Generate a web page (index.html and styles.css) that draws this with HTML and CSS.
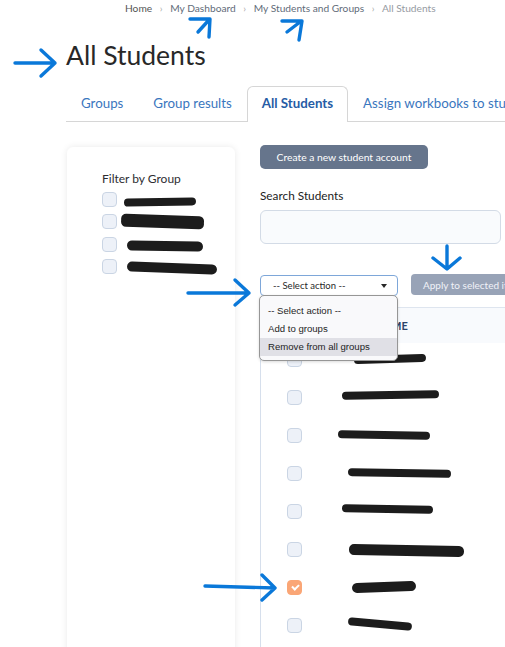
FILE: index.html
```html
<!DOCTYPE html>
<html lang="en">

<head>
  <meta charset="utf-8">
  <title>All Students</title>
  <meta name="viewport" content="width=device-width, initial-scale=1.0">
  <link rel="stylesheet" href="styles.css">
</head>

<body>
  <div class="page">
    <!--breadcrumb-->
    <nav class="crumbs">
      <a class="crumb crumb-home" href="#">Home</a>
      <span class="sep">&rsaquo;</span>
      <a class="crumb" href="#">My Dashboard</a>
      <span class="sep">&rsaquo;</span>
      <a class="crumb" href="#">My Students and Groups</a>
      <span class="sep">&rsaquo;</span>
      <span class="crumb crumb-current">All Students</span>
    </nav>

    <h1 class="title">All Students</h1>

    <ul class="tabs">
      <li class="tab">Groups</li>
      <li class="tab">Group results</li>
      <li class="tab tab-active">All Students</li>
      <li class="tab">Assign workbooks to students</li>
    </ul>

    <div class="main">
      <aside class="filter-card">
        <p class="filter-title">Filter by Group</p>
        <div class="filter-row"><span class="check"></span><span class="scribble f1"></span></div>
        <div class="filter-row"><span class="check"></span><span class="scribble f2"></span></div>
        <div class="filter-row"><span class="check"></span><span class="scribble f3"></span></div>
        <div class="filter-row"><span class="check"></span><span class="scribble f4"></span></div>
      </aside>

      <section class="students">
        <button class="btn-create">Create a new student account</button>
        <label class="search-label" for="search">Search Students</label>
        <input class="search-input" type="text" id="search">

        <div class="actions">
          <div class="select-wrap">
            <div class="select">-- Select action --<span class="caret"></span></div>
            <ul class="select-menu">
              <li>-- Select action --</li>
              <li>Add to groups</li>
              <li class="hover">Remove from all groups</li>
            </ul>
          </div>
          <button class="btn-apply">Apply to selected items</button>
        </div>

        <div class="table">
          <div class="table-head"><span class="head-name">NAME</span></div>
          <div class="row"><span class="check"></span><span class="scribble r1"></span></div>
          <div class="row"><span class="check"></span><span class="scribble r2"></span></div>
          <div class="row"><span class="check"></span><span class="scribble r3"></span></div>
          <div class="row"><span class="check"></span><span class="scribble r4"></span></div>
          <div class="row"><span class="check"></span><span class="scribble r5"></span></div>
          <div class="row"><span class="check"></span><span class="scribble r6"></span></div>
          <div class="row"><span class="check checked"></span><span class="scribble r7"></span></div>
          <div class="row"><span class="check"></span><span class="scribble r8"></span></div>
        </div>
      </section>
    </div>

    <!--blue annotation arrows drawn over the page-->
    <svg class="annotations" width="505" height="647" viewBox="0 0 505 647">
      <g fill="none" stroke="#0a78d9" stroke-width="3.4" stroke-linecap="round" stroke-linejoin="round">
        <path d="M198 32 L208 21 M190 19 L210 19 L209 37" />
        <path d="M287 32 L300 22 M282 21 L302 21 L299 40" />
        <path d="M15 63 L55 63 M41 50 L55 63 L41 76" />
        <path d="M447 246 L447 268 M433 258 L447 269 L460 258" />
        <path d="M188 293 L249 293 M235 280 L249 293 L235 305" />
        <path d="M205 586 L275 588 M262 575 L275 588 L262 600" />
      </g>
    </svg>
  </div>
</body>

</html>
```

FILE: styles.css
```css
:root {
  --link-color: rgb(58, 118, 190);
  --active-color: rgb(38, 92, 165);
  --text-color: rgb(51, 51, 51);
  --line-color: rgb(214, 214, 214);
  --box-border: rgb(202, 213, 228);
  --box-background: rgb(237, 241, 248);
  --slate: rgb(102, 117, 140);
  --slate-light: rgb(152, 163, 183);
}

body {
  margin: 0;
  font-family: Lato, "Open Sans", sans-serif;
  color: var(--text-color);
  background-color: white;
  overflow: hidden;
}

.page {
  position: relative;
  width: 505px;
  height: 647px;
  overflow: hidden;
  padding-left: 66px;
  box-sizing: border-box;
}

/* breadcrumb */
.crumbs {
  margin-left: 59px;
  height: 16px;
  line-height: 16px;
  font-size: 10.2px;
  white-space: nowrap;
}

.crumb {
  color: rgb(98, 108, 122);
  text-decoration: none;
}

.crumb-home {
  color: rgb(85, 85, 85);
}

.crumb-current {
  color: rgb(150, 155, 162);
}

.sep {
  display: inline-block;
  margin: 0 5px;
  color: rgb(170, 170, 170);
  font-size: 10px;
}

.title {
  margin: 22px 0 0 0;
  font-size: 26.5px;
  line-height: 34px;
  font-weight: normal;
  color: rgb(40, 40, 40);
}

/* tabs */
.tabs {
  display: flex;
  list-style: none;
  margin: 14px 0 0 0;
  padding: 0;
  border-bottom: 1px solid var(--line-color);
  white-space: nowrap;
}

.tab {
  padding: 6px 14px 8px;
  font-size: 13.3px;
  line-height: 20px;
  color: var(--link-color);
  border: 1px solid transparent;
  border-bottom: 0;
  margin-bottom: -1px;
}

.tab-active {
  color: var(--active-color);
  font-weight: bold;
  border-color: var(--line-color);
  border-radius: 6px 6px 0 0;
  background-color: white;
  padding: 6px 14px 9px;
}

.main {
  display: flex;
  gap: 25px;
  margin-top: 23px;
}

/* filter card */
.filter-card {
  flex: 0 0 168px;
  height: 520px;
  margin: 2px 0 0 1px;
  padding: 24px 0 0 35px;
  box-sizing: border-box;
  background-color: white;
  border-radius: 6px;
  box-shadow: 0 0 7px rgba(0, 0, 0, 0.09);
}

.filter-title {
  margin: 0 0 5px 0;
  font-size: 12px;
  line-height: 16px;
  color: rgb(45, 45, 50);
}

.filter-row {
  display: flex;
  align-items: flex-start;
  height: 22.3px;
}

.check {
  flex: 0 0 auto;
  position: relative;
  width: 15px;
  height: 15px;
  box-sizing: border-box;
  border: 1px solid var(--box-border);
  border-radius: 4px;
  background-color: var(--box-background);
}

.check.checked {
  border-color: rgb(250, 166, 118);
  background-color: rgb(250, 166, 118);
}

.check.checked::after {
  content: "";
  position: absolute;
  left: 4px;
  top: 3px;
  width: 5px;
  height: 3px;
  border-left: 2px solid white;
  border-bottom: 2px solid white;
  transform: rotate(-45deg);
}

/* black marker lines over the names */
.scribble {
  display: block;
  height: 8px;
  border-radius: 5px;
  background-color: rgb(28, 28, 28);
}

.f1 { width: 72px; margin: 6px 0 0 7px; transform: rotate(-1deg); }
.f2 { width: 83px; height: 10px; margin: 4px 0 0 4px; transform: rotate(2deg); box-shadow: 0 -3px 0 rgb(28, 28, 28); }
.f3 { width: 76px; height: 10px; margin: 4px 0 0 10px; transform: rotate(1deg); }
.f4 { width: 90px; height: 10px; margin: 4px 0 0 10px; transform: rotate(2deg); }

/* students column */
.students {
  flex: 0 0 240px;
  display: flex;
  flex-direction: column;
  align-items: flex-start;
}

.btn-create {
  height: 24px;
  width: 168px;
  padding: 0;
  border: 0;
  border-radius: 5px;
  background-color: var(--slate);
  color: white;
  font-family: inherit;
  font-size: 10.3px;
}

.search-label {
  margin-top: 19px;
  font-size: 11.8px;
  line-height: 16px;
  color: rgb(34, 34, 34);
}

.search-input {
  width: 241px;
  height: 34px;
  margin-top: 6px;
  box-sizing: border-box;
  border: 1px solid rgb(211, 219, 230);
  border-radius: 6px;
  background-color: rgb(249, 251, 253);
}

.actions {
  display: flex;
  gap: 13px;
  margin-top: 31px;
  white-space: nowrap;
}

.select-wrap {
  position: relative;
}

.select {
  position: relative;
  width: 138px;
  height: 21px;
  box-sizing: border-box;
  padding-left: 12px;
  border: 1px solid rgb(126, 167, 217);
  border-radius: 4px;
  font-size: 9.5px;
  line-height: 19px;
  color: rgb(40, 40, 40);
}

.caret {
  position: absolute;
  right: 10px;
  top: 8px;
  border-left: 3px solid transparent;
  border-right: 3px solid transparent;
  border-top: 4px solid rgb(40, 40, 40);
}

.select-menu {
  position: absolute;
  left: -1px;
  top: 20px;
  z-index: 2;
  width: 139px;
  margin: 0;
  padding: 6px 0 4px;
  box-sizing: border-box;
  list-style: none;
  background-color: rgb(249, 249, 251);
  border: 1px solid rgb(150, 150, 150);
  border-radius: 5px;
  box-shadow: 0 1px 3px rgba(0, 0, 0, 0.15);
  font-family: "Liberation Sans", Arial, sans-serif;
  font-size: 9.6px;
  color: rgb(30, 30, 30);
}

.select-menu li {
  height: 18px;
  line-height: 18px;
  padding-left: 8px;
}

.select-menu li.hover {
  background-color: rgb(224, 224, 230);
}

.btn-apply {
  height: 21px;
  width: 130px;
  margin-top: -1px;
  padding: 0 0 0 12px;
  text-align: left;
  border: 0;
  border-radius: 4px;
  background-color: var(--slate-light);
  color: rgb(240, 242, 248);
  font-family: inherit;
  font-size: 10px;
}

/* students table */
.table {
  width: 320px;
  margin-top: 11px;
  border-left: 1px solid rgb(214, 223, 236);
  border-top: 1px solid rgb(222, 229, 239);
}

.table-head {
  height: 35px;
  line-height: 35px;
  padding-left: 114px;
  background-color: rgb(248, 250, 253);
  font-size: 11px;
  font-weight: bold;
  color: rgb(44, 66, 105);
}

.row {
  display: flex;
  align-items: flex-start;
  height: 38px;
  padding: 9px 0 0 26px;
  box-sizing: border-box;
}

.r1 { width: 72px; margin: 3px 0 0 52px; transform: rotate(-2deg); }
.r2 { width: 97px; margin: 1px 0 0 40px; transform: rotate(-1deg); }
.r3 { width: 92px; margin: 3px 0 0 36px; transform: rotate(1deg); }
.r4 { width: 103px; margin: 3px 0 0 46px; transform: rotate(1deg); }
.r5 { width: 91px; margin: 1px 0 0 40px; transform: rotate(1deg); }
.r6 { width: 115px; height: 11px; margin: 3px 0 0 47px; transform: rotate(1deg); }
.r7 { width: 64px; height: 10px; margin: 2px 0 0 50px; transform: rotate(-2deg); }
.r8 { width: 64px; margin: 2px 0 0 46px; transform: rotate(5deg); }

.annotations {
  position: absolute;
  left: 0;
  top: 0;
  pointer-events: none;
}
```
